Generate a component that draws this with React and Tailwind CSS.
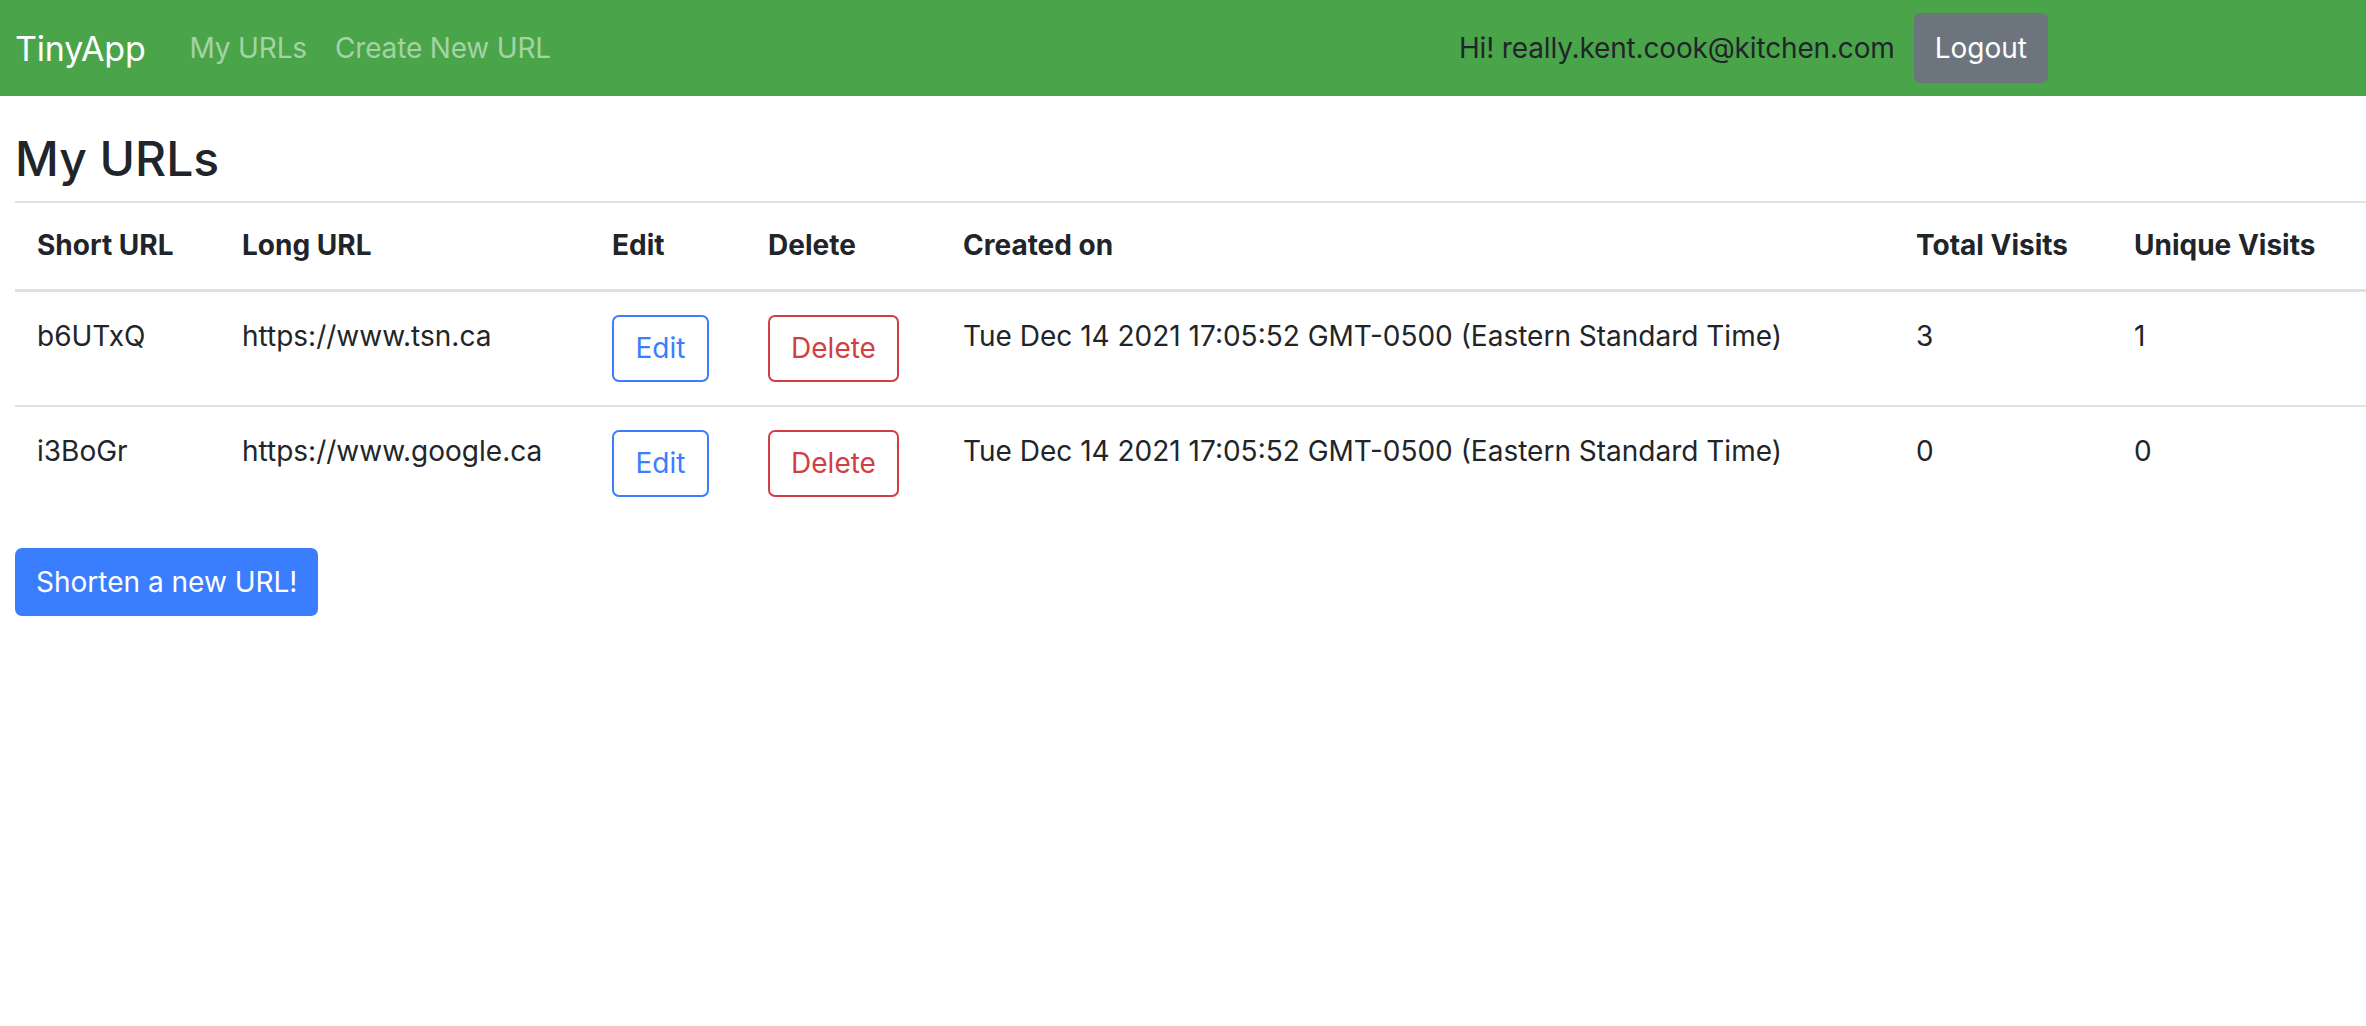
import React from 'react'

const URLS = [
  { short: 'b6UTxQ', long: 'https://www.tsn.ca', created: 'Tue Dec 14 2021 17:05:52 GMT-0500 (Eastern Standard Time)', total: 3, unique: 1 },
  { short: 'i3BoGr', long: 'https://www.google.ca', created: 'Tue Dec 14 2021 17:05:52 GMT-0500 (Eastern Standard Time)', total: 0, unique: 0 },
]

const COLS = ['Short URL', 'Long URL', 'Edit', 'Delete', 'Created on', 'Total Visits', 'Unique Visits']
const WIDTHS = ['w-[205px]', 'w-[370px]', 'w-[156px]', 'w-[195px]', 'w-[953px]', 'w-[218px]', 'w-auto']

const TD = 'px-[22px] pt-[23px] pb-[23px] align-top border-t-2 border-[#dee2e6]'

function Navbar() {
  return (
    <nav className="h-[96px] bg-[#4aa54a] flex items-center pl-[15px] pr-[318px] tracking-[-0.01em]">
      <a href="#" className="text-white text-[34px] leading-[1.5] mr-[30px]">TinyApp</a>
      <a href="#" className="text-[#a4d3a4] text-[28px] px-[14px]">My URLs</a>
      <a href="#" className="text-[#a4d3a4] text-[28px] px-[14px]">Create New URL</a>
      <div className="ml-auto flex items-center gap-[19px]">
        <span className="text-[#212529] text-[28px]">Hi! really.kent.cook@kitchen.com</span>
        <button type="button" className="h-[70px] px-[21px] rounded-[7px] bg-[#6c757d] text-white text-[28px] tracking-normal">
          Logout
        </button>
      </div>
    </nav>
  )
}

export default function App() {
  return (
    <div className="min-h-screen bg-white text-[#212529] font-['Inter','Liberation_Sans',sans-serif]">
      <Navbar />
      <main className="pl-[15px]">
        <h2 className="text-[48px] leading-[1.2] font-medium mt-[34px] mb-[13px]">My URLs</h2>
        <table className="w-full table-fixed border-collapse text-[28px] leading-[42px]">
          <thead>
            <tr>
              {COLS.map((c, i) => (
                <th key={c} className={`${WIDTHS[i]} text-left font-bold px-[22px] pt-[21px] pb-[23px] border-t-2 border-b-[3px] border-[#dee2e6] align-bottom`}>
                  {c}
                </th>
              ))}
            </tr>
          </thead>
          <tbody>
            {URLS.map((u) => (
              <tr key={u.short}>
                <td className={TD}>{u.short}</td>
                <td className={TD}>{u.long}</td>
                <td className={TD}>
                  <button type="button" className="h-[67px] w-[97px] border-2 border-[#3a7efd] text-[#3a7efd] rounded-[7px]">Edit</button>
                </td>
                <td className={TD}>
                  <button type="button" className="h-[67px] w-[131px] border-2 border-[#d13f45] text-[#d13f45] rounded-[7px]">Delete</button>
                </td>
                <td className={`${TD} whitespace-nowrap`}>{u.created}</td>
                <td className={TD}>{u.total}</td>
                <td className={TD}>{u.unique}</td>
              </tr>
            ))}
          </tbody>
        </table>
        <button type="button" className="mt-[28px] h-[68px] px-[21px] rounded-[7px] bg-[#3a7efd] text-white text-[28px]">
          Shorten a new URL!
        </button>
      </main>
    </div>
  )
}
